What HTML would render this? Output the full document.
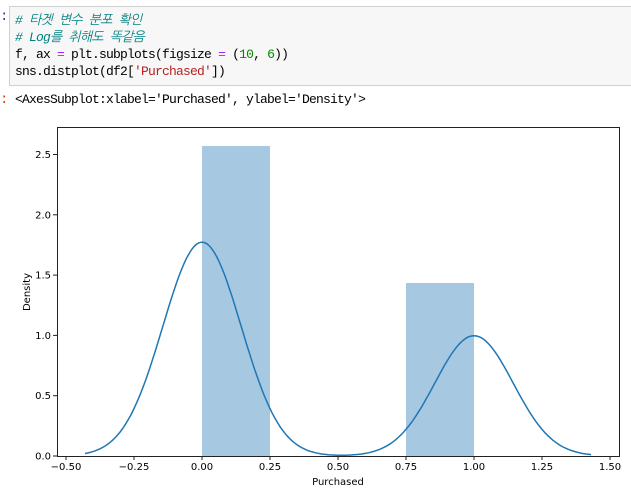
<!DOCTYPE html>
<html><head><meta charset="utf-8"><style>
body{margin:0;width:631px;height:494px;background:#fff;overflow:hidden;position:relative;font-family:"Liberation Mono","NanumGothic","Noto Sans CJK KR",monospace;}
.cell{position:absolute;left:9px;top:6px;width:630px;height:80px;background:#f7f7f7;border:1px solid #cfcfcf;box-sizing:border-box;}
.code{position:absolute;left:5px;top:5px;font-size:13px;letter-spacing:-0.8px;line-height:17px;color:#000;white-space:pre;}
.c{color:#008080;font-style:italic}
.o{color:#aa22ff}
.n{color:#080}
.s{color:#ba2121}
.p{position:absolute;left:0;font-size:14px;}
.out{position:absolute;left:15px;top:92px;font-size:13px;letter-spacing:-0.8px;white-space:pre;}
svg{position:absolute;left:0;top:0}
svg text{font-family:"DejaVu Sans",sans-serif;font-size:10px;fill:#000}
</style></head><body>
<div class="p" style="top:9px;color:#303f9f">:</div>
<div class="p" style="top:92px;color:#d84315">:</div>
<div class="cell"><div class="code"><span class="c"># 타겟 변수 분포 확인</span>
<span class="c"># Log를 취해도 똑같음</span>
f, ax <span class="o">=</span> plt.subplots(figsize <span class="o">=</span> (<span class="n">10</span>, <span class="n">6</span>))
sns.distplot(df2[<span class="s">'Purchased'</span>])</div></div>
<div class="out">&lt;AxesSubplot:xlabel='Purchased', ylabel='Density'&gt;</div>
<svg width="631" height="494" id="g">
<rect x="202" y="146" width="68" height="310" fill="#a6c8e1"/>
<rect x="406" y="283" width="68" height="173" fill="#a6c8e1"/>
<path id="kde" fill="none" stroke="#1f77b4" stroke-width="1.5"/>
<rect x="57.5" y="127.5" width="562" height="329" fill="none" stroke="#222" stroke-width="1"/>
<g id="ticks"></g>
<text x="338" y="485" text-anchor="middle">Purchased</text>
<text transform="translate(30,292) rotate(-90)" text-anchor="middle">Density</text>
</svg>
<script>
var X=function(v){return 202+272*v},Y=function(v){return 456-120.6*v};
var s=0.144,d="";
for(var i=0;i<=200;i++){var x=-0.43+1.86*i/200;
var y=0.64*Math.exp(-x*x/(2*s*s))/(s*2.5066)+0.36*Math.exp(-(x-1)*(x-1)/(2*s*s))/(s*2.5066);
d+=(i?"L":"M")+X(x).toFixed(1)+" "+Y(y).toFixed(1);}
document.getElementById("kde").setAttribute("d",d);
var t="";
["-0.50","-0.25","0.00","0.25","0.50","0.75","1.00","1.25","1.50"].forEach(function(l){var x=X(parseFloat(l));
t+='<line x1="'+x+'" x2="'+x+'" y1="456" y2="460" stroke="#222"/><text x="'+x+'" y="470" text-anchor="middle">'+l.replace("-","\u2212")+'</text>';});
["0.0","0.5","1.0","1.5","2.0","2.5"].forEach(function(l){var y=Y(parseFloat(l));
t+='<line x1="53" x2="57" y1="'+y+'" y2="'+y+'" stroke="#222"/><text x="51" y="'+(y+3.5)+'" text-anchor="end">'+l+'</text>';});
document.getElementById("ticks").innerHTML=t;
</script>
</body></html>
